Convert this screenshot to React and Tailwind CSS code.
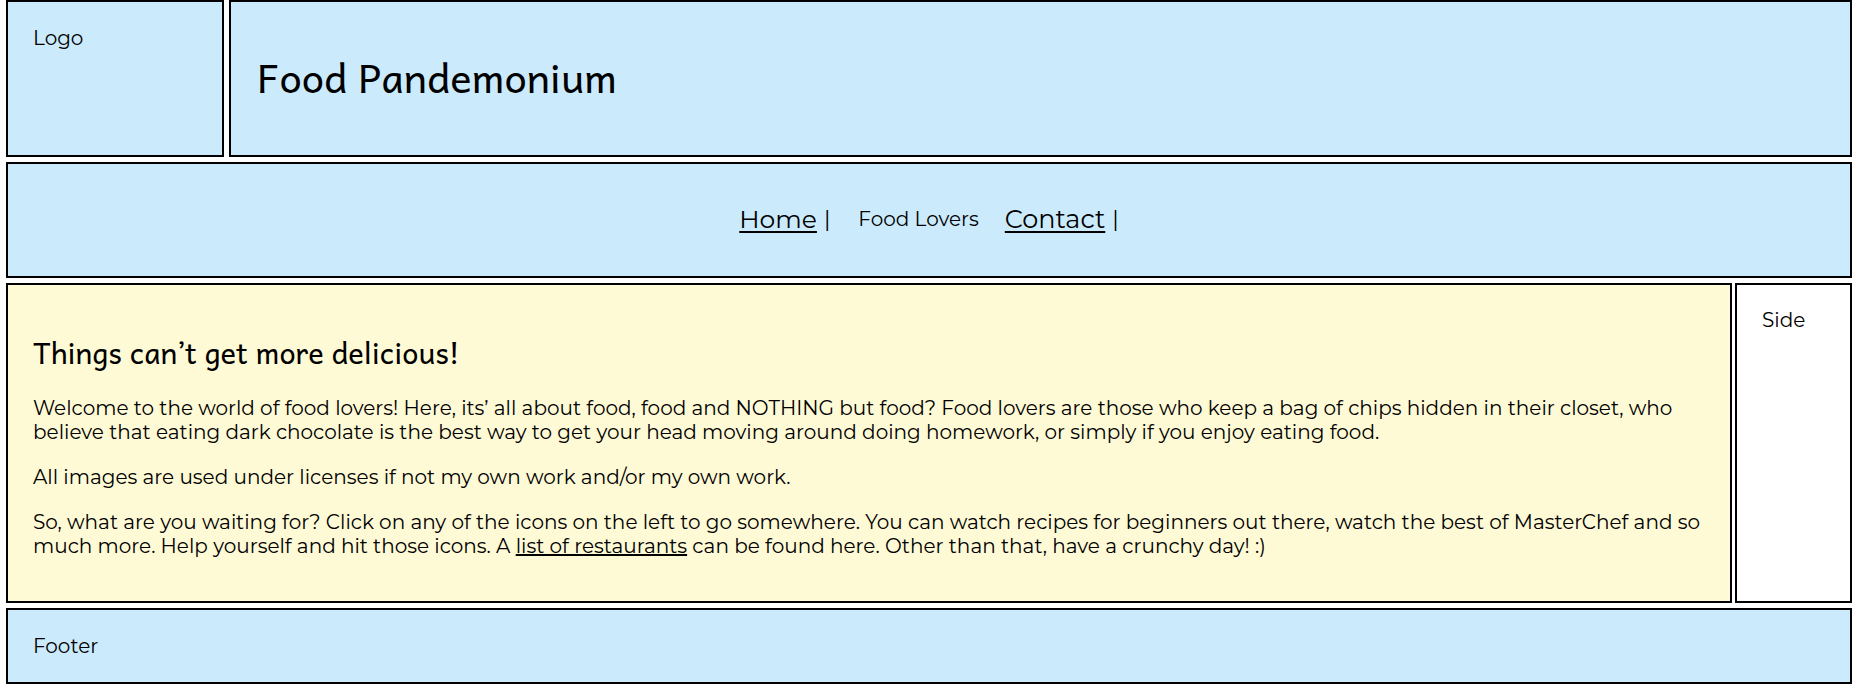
export default function App() {
    const body = { fontFamily: "Montserrat, Inter, 'Open Sans', sans-serif" };
    const hand = { fontFamily: "Andika, 'Noto Sans', 'Open Sans', sans-serif" };

    return (
        <div className="ml-[6px] flex w-[1846px] flex-col gap-[5px] text-black" style={body}>
            <div className="flex h-[157px] gap-[5px]">
                <div className="w-[218px] border-2 border-black bg-[#cbebfd] pl-[25px] pt-[24px] text-[20px] leading-[24px]">Logo</div>
                <div className="flex flex-1 items-center border-2 border-black bg-[#cbebfd] pb-[4px] pl-[26px]">
                    <h1 className="text-[40px] leading-[48px]" style={hand}>Food Pandemonium</h1>
                </div>
            </div>

            <nav className="flex h-[116px] items-center justify-center border-2 border-black bg-[#cbebfd] pb-[2px]">
                <a href="#" className="text-[25px] leading-[30px] underline underline-offset-[3px]">Home</a>
                <span className="ml-[7px] text-[22px]">|</span>
                <span className="ml-[28px] text-[20px]">Food Lovers</span>
                <a href="#" className="ml-[26px] text-[25.5px] leading-[30px] underline underline-offset-[3px]">Contact</a>
                <span className="ml-[7px] text-[22px]">|</span>
            </nav>

            <div className="flex h-[320px] gap-[3px]">
                <main className="flex-1 border-2 border-black bg-[#fffad6] pl-[25px] pr-[22px] pt-[50px] text-[20px] leading-[24px]">
                    <h2 className="mb-[26px] text-[29px] leading-[35px]" style={hand}>Things can’t get more delicious!</h2>
                    <p className="mb-[21px]">
                        Welcome to the world of food lovers! Here, its’ all about food, food and NOTHING but food? Food lovers are those who keep a bag of chips hidden in their closet, who believe that eating dark chocolate is the best way to get your head moving around doing homework, or simply if you enjoy eating food.
                    </p>
                    <p className="mb-[21px]">All images are used under licenses if not my own work and/or my own work.</p>
                    <p>
                        So, what are you waiting for? Click on any of the icons on the left to go somewhere. You can watch recipes for beginners out there, watch the best of MasterChef and so much more. Help yourself and hit those icons. A <a href="#" className="underline">list of restaurants</a> can be found here. Other than that, have a crunchy day! :)
                    </p>
                </main>
                <aside className="w-[117px] border-2 border-black bg-white pl-[25px] pt-[23px] text-[20px] leading-[24px]">Side</aside>
            </div>

            <footer className="flex h-[76px] items-center border-2 border-black bg-[#cbebfd] pl-[25px] text-[20px] leading-[24px]">Footer</footer>
        </div>
    );
}
